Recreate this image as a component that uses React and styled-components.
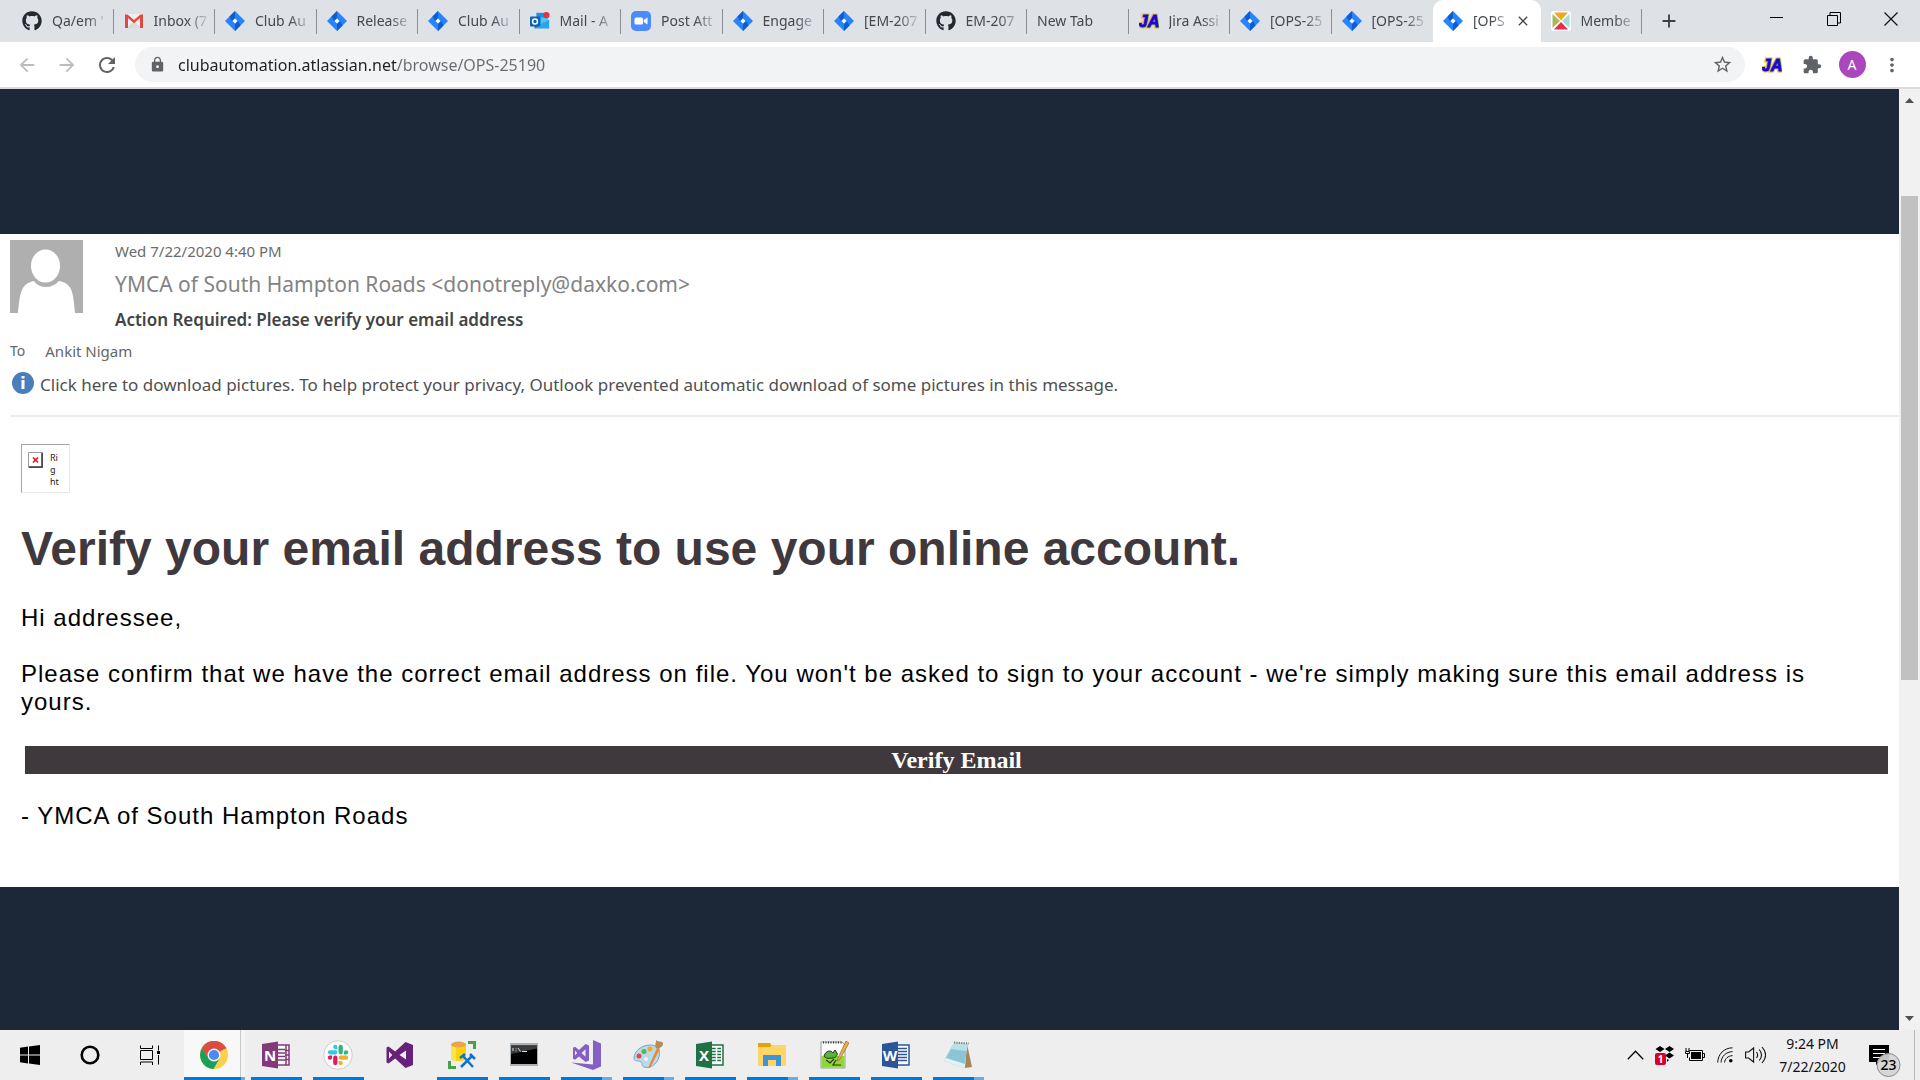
import React, { useState } from "react";
import styled, { createGlobalStyle, css } from "styled-components";
import { FaGithub } from "react-icons/fa";
import {
  MdAdd,
  MdArrowBack,
  MdArrowForward,
  MdClose,
  MdExtension,
  MdLock,
  MdMoreVert,
  MdRefresh,
  MdStarBorder,
} from "react-icons/md";

const ui = `"Noto Sans", "Open Sans", sans-serif`;
const arial = `"Liberation Sans", Arial, sans-serif`;
const times = `"Liberation Serif", "Times New Roman", serif`;

const GlobalStyle = createGlobalStyle`
  *, *::before, *::after { box-sizing: border-box; }
  body { margin: 0; font-family: ${ui}; background: #1c2738; }
  button { font: inherit; color: inherit; background: none; border: 0; padding: 0; cursor: pointer; }
  svg { display: block; flex: none; }
  h1, h2, p { margin: 0; }
`;

const Screen = styled.div`
  display: flex;
  flex-direction: column;
  height: 100vh;
  overflow: hidden;
`;

/* ---------- tab strip ---------- */

const TabStrip = styled.header`
  display: flex;
  flex: none;
  height: 42px;
  padding: 0 1px 0 12px;
  background: #dee1e6;
`;

const TabList = styled.div`
  display: flex;
  flex: 0 1 1630px;
  min-width: 0;
`;

const TabTitle = styled.span`
  flex: 1;
  min-width: 0;
  margin-left: 10px;
  overflow: hidden;
  white-space: nowrap;
  mask-image: linear-gradient(90deg, #000 calc(100% - 24px), transparent);

  &:first-child {
    margin-left: 0;
  }
`;

const Tab = styled.button`
  display: flex;
  flex: 1 1 0;
  min-width: 0;
  align-items: center;
  padding: 0 4px 0 10px;
  color: #45494d;
  font-size: 14px;
  line-height: 20px;
  text-align: left;
  background: linear-gradient(#8a8d91, #8a8d91) right 9px / 1px 25px no-repeat;
  ${(p) => p.$plain && css`background: none;`}
  ${(p) =>
    p.$active &&
    css`
      padding-right: 10px;
      background: #fff;
      border-radius: 10px 10px 0 0;
    `}
`;

const NewTab = styled.button`
  display: grid;
  place-items: center;
  width: 54px;
  color: #3c4043;
`;

const WindowControls = styled.div`
  display: flex;
  margin-left: auto;
`;

const WindowButton = styled.button`
  display: grid;
  place-items: center;
  width: 57px;
  height: 37px;
`;

/* ---------- toolbar ---------- */

const Toolbar = styled.nav`
  display: flex;
  flex: none;
  align-items: center;
  height: 47px;
  padding: 0 8px 0 7px;
  background: #fff;
  border-bottom: 2px solid #dadbe0;
`;

const ToolButton = styled.button`
  display: grid;
  place-items: center;
  width: 40px;
  height: 35px;
  color: ${(p) => (p.$faded ? "#babcbe" : "#5f6368")};
`;

const AddressBar = styled.label`
  display: flex;
  flex: 1;
  align-items: center;
  gap: 12px;
  height: 35px;
  margin: 0 7px 0 8px;
  padding: 0 3px 0 14px;
  color: #5f6368;
  background: #f1f3f4;
  border-radius: 18px;
`;

const AddressInput = styled.input`
  flex: 1;
  min-width: 0;
  padding: 0;
  border: 0;
  outline: 0;
  color: #202124;
  font-family: ${ui};
  font-size: 16px;
  line-height: 24px;
  background: linear-gradient(90deg, #202124 219px, #676b70 219px);
  background-clip: text;
  -webkit-text-fill-color: transparent;
`;

const Avatar = styled.span`
  display: grid;
  place-items: center;
  width: 27px;
  height: 27px;
  color: #fff;
  font-size: 14px;
  line-height: 20px;
  background: #ab47bc;
  border-radius: 50%;
`;

/* ---------- page ---------- */

const Viewport = styled.main`
  display: flex;
  flex: 1;
  min-height: 0;
`;

const Lightbox = styled.div`
  flex: 1;
  min-width: 0;
  padding-top: 145px;
  overflow: hidden;
  background: #1c2738;
`;

const Mail = styled.article`
  padding: 6px 0 57px;
  background: #fff;
`;

const MailHead = styled.header`
  margin-left: 10px;
  padding-bottom: 13px;
  border-bottom: 2px solid #ececee;
`;

const SenderRow = styled.div`
  display: flex;
  gap: 32px;
`;

const SentAt = styled.p`
  color: #6b6b6b;
  font-size: 15px;
  line-height: 22px;
`;

const Sender = styled.p`
  color: #838383;
  font-size: 21px;
  line-height: 44px;
`;

const Subject = styled.h2`
  color: #444;
  font-size: 17px;
  font-weight: 600;
  line-height: 28px;
`;

const ToRow = styled.p`
  display: flex;
  gap: 20px;
  color: #666;
  font-size: 15px;
  line-height: 34px;
`;

const ToLabel = styled.span`
  font-size: 14px;
`;

const Notice = styled.button`
  display: flex;
  gap: 6px;
  padding-left: 2px;
  color: #505050;
  font-size: 17px;
  line-height: 34px;
  text-align: left;
`;

const InfoIcon = styled.svg`
  margin-top: 4px;
`;

const MailBody = styled.div`
  display: flex;
  flex-direction: column;
  gap: 28px;
  padding: 27px 11px 0 21px;
  color: #000;
  font-family: ${arial};
  font-size: 24px;
  line-height: 28px;
`;

const Copy = styled.p`
  padding-right: 12px;
  letter-spacing: 1px;
`;

const MissingImage = styled.div`
  display: flex;
  gap: 7px;
  width: 49px;
  height: 49px;
  padding: 7px 6px;
  border: 1px solid #e8e8e8;
  border-top-color: #a5a5a5;
  border-left-color: #a5a5a5;
  color: #222;
  font-family: ${ui};
  font-size: 9px;
  line-height: 12px;
`;

const Title = styled.h1`
  color: #3f393d;
  font-size: 48px;
  font-weight: 700;
  line-height: 55px;
`;

const VerifyLink = styled.a`
  display: block;
  margin: 2px 0 0 4px;
  color: #fff;
  font-family: ${times};
  font-weight: 700;
  text-align: center;
  text-decoration: none;
  background: #3f393d;
`;

/* ---------- scrollbar ---------- */

const Scrollbar = styled.div`
  display: flex;
  flex: none;
  flex-direction: column;
  width: 21px;
  padding: 9px 2px;
  background: #f1f1f1;
`;

const ScrollArrow = styled.svg`
  margin: 0 auto;
`;

const ScrollGap = styled.div`
  flex: ${(p) => p.$share} 1 0;
`;

const ScrollThumb = styled.div`
  flex: 484 1 0;
  background: #c1c1c1;
`;

/* ---------- taskbar ---------- */

const Taskbar = styled.footer`
  display: flex;
  flex: none;
  height: 50px;
  background: #eee;
`;

const SystemButton = styled.button`
  display: grid;
  place-items: center;
  width: 60px;
`;

const AppList = styled.div`
  display: flex;
  padding-left: 4px;
`;

const AppButton = styled.button`
  display: grid;
  place-items: center;
  width: 62px;
  padding-right: 1px;
  border: solid transparent;
  border-width: 0 6px 0 5px;
  background: ${(p) =>
    p.$state === "idle"
      ? "none"
      : p.$state === "stacked"
        ? "linear-gradient(90deg, #0078d7 41px, #66aee7 41px) bottom / 100% 3px no-repeat"
        : "linear-gradient(#0078d7, #0078d7) bottom / 100% 3px no-repeat"};
  background-clip: padding-box;
  background-origin: padding-box;
  ${(p) =>
    p.$state === "focused" &&
    css`
      border-width: 0 1px 0 0;
      background:
        linear-gradient(90deg, #0078d7 57px, #66aee7 57px) bottom / 100% 3px no-repeat,
        linear-gradient(90deg, #f8f8f8 56px, #c8c8c8 56px 57px, #f4f4f4 57px);
      background-clip: padding-box;
      background-origin: padding-box;
    `}
`;

const Tray = styled.div`
  display: flex;
  align-items: center;
  margin-left: auto;
`;

const TrayButton = styled.button`
  display: grid;
  place-items: center;
  width: 30px;
  height: 50px;
`;

const Clock = styled.button`
  width: 85px;
  color: #111;
  font-size: 14px;
  line-height: 23px;
  text-align: center;
`;

const ActionCenter = styled.button`
  display: grid;
  place-items: center;
  width: 60px;
  height: 50px;
  margin-right: 5px;
  padding-top: 12px;
  border-right: 1px solid #bbb;
`;

/* ---------- icons ---------- */

const Jira = () => (
  <svg width="20" height="20" viewBox="0 0 20 20">
    <path d="M10 0 20 10 10 20 0 10Z" fill="#2684ff" />
    <path d="M10 0v7L7 10 4.500 5.500Z" fill="#0f5bd0" />
    <path d="M10 20v-7l3-3 2.500 4.500Z" fill="#0f5bd0" />
    <path d="M10 7.500 12.500 10 10 12.500 7.500 10Z" fill="#fff" />
  </svg>
);

const Gmail = () => (
  <svg width="20" height="20" viewBox="0 0 20 20">
    <path d="M2 3h16v14H2Z" fill="#f0eeee" />
    <path d="M3 17 10 10l7 7Z" fill="#dddada" />
    <path d="M1 3.500h2.500L10 9l6.500-5.500H19V17h-3V7l-6 5.200L4 7v10H1Z" fill="#dd4b3e" />
  </svg>
);

const Outlook = () => (
  <svg width="20" height="20" viewBox="0 0 22 20">
    <path d="M7 1h12v12H7Z" fill="#1c8fe0" />
    <path d="M12 6h8v6h-8Z" fill="#50c5f5" />
    <path d="M5 9l8 5 8-5v9H5Z" fill="#1272c4" />
    <path d="M5 18 21 9v9Z" fill="#2aa5ec" />
    <rect y="5" width="11" height="11" rx="1" fill="#0a62b5" />
    <circle cx="5.500" cy="10.500" r="2.700" fill="none" stroke="#fff" strokeWidth="1.600" />
    <circle cx="18" cy="3.500" r="3.500" fill="#d93840" />
  </svg>
);

const Zoom = () => (
  <svg width="20" height="20" viewBox="0 0 20 20">
    <rect width="20" height="20" rx="5" fill="#4a8cff" />
    <rect x="3.500" y="6.500" width="8.500" height="7" rx="1.500" fill="#fff" />
    <path d="M12.700 9 16.500 6.500v7L12.700 11Z" fill="#fff" />
  </svg>
);

const JiraAssistant = () => (
  <svg width="20" height="20" viewBox="0 0 20 20">
    <text
      x="10"
      y="16"
      textAnchor="middle"
      fontFamily="Liberation Sans Narrow, Liberation Sans, sans-serif"
      fontSize="16"
      fontWeight="700"
      fontStyle="italic"
      fill="none"
      stroke="#d8c440"
      strokeWidth="3"
      aria-hidden="true"
    >
      JA
    </text>
    <text
      x="10"
      y="16"
      textAnchor="middle"
      fontFamily="Liberation Sans Narrow, Liberation Sans, sans-serif"
      fontSize="16"
      fontWeight="700"
      fontStyle="italic"
      fill="#1708d0"
      stroke="#1708d0"
      strokeWidth=".9"
    >
      JA
    </text>
  </svg>
);

const Member = () => (
  <svg width="20" height="20" viewBox="0 0 20 20">
    <rect width="20" height="20" rx="3" fill="#fff" />
    <path d="M3 1.500h14L10 9.500Z" fill="#efa820" />
    <path d="M1.500 3 9 10l-7.500 7Z" fill="#a9b957" />
    <path d="M18.500 3 11 10l7.500 7Z" fill="#a4dcd8" />
    <path d="M3 18.500h14L10 11Z" fill="#ec2c4c" />
  </svg>
);

const Minimise = () => (
  <svg width="13" height="13" viewBox="0 0 13 13" stroke="#000">
    <path d="M0 5.500h13" />
  </svg>
);

const Restore = () => (
  <svg width="14" height="14" viewBox="0 0 14 14" fill="none" stroke="#000">
    <path d="M.5 3.500h10v10H.5ZM3 3.500v-3h10.500V11h-3" />
  </svg>
);

const CloseWindow = () => (
  <svg width="14" height="14" viewBox="0 0 14 14" stroke="#111" strokeWidth="1.200">
    <path d="m.5.5 13 13M13.500.5l-13 13" />
  </svg>
);

const Person = () => (
  <svg width="73" height="73" viewBox="0 0 73 73">
    <path d="M0 0h73v73H0Z" fill="#afafaf" />
    <path d="M8 73C10 50 12 44 24 41c3 4 7 6 12 6s9-2 13-6c13 3 14 9 16 32Z" fill="#fff" />
    <ellipse cx="35.500" cy="26" rx="14.500" ry="16.500" fill="#fff" />
  </svg>
);

const Windows = () => (
  <svg width="20" height="20" viewBox="0 0 20 20">
    <path d="M0 2.800 8 1.600v7.900H0ZM9 1.500 20 0v9.500H9ZM0 10.500h8v7.900l-8-1.200ZM9 10.500h11V20L9 18.500Z" />
  </svg>
);

const Cortana = () => (
  <svg width="20" height="20" viewBox="0 0 20 20" fill="none" stroke="#000" strokeWidth="2.600">
    <circle cx="10" cy="10" r="8.300" />
  </svg>
);

const TaskView = () => (
  <svg width="20" height="20" viewBox="0 0 20 20" fill="none" stroke="#000">
    <path d="M.5.5v3h12v-3M.5 5.500h12v9H.5ZM.5 20v-3h12v3M18.500.5v5M18.500 10v9.500" />
    <path d="M17 6h3v3h-3Z" fill="#000" stroke="none" />
  </svg>
);

const Chrome = () => (
  <svg width="28" height="28" viewBox="0 0 28 28">
    <circle cx="14" cy="14" r="14" fill="#fcd04b" />
    <path d="M14 14 1.900 7A14 14 0 0 1 26.100 7Z" fill="#dc4c3f" />
    <path d="M14 7.500h12.500A14 14 0 0 0 1.900 7L8 17.500Z" fill="#dc4c3f" />
    <path d="M1.900 7A14 14 0 0 0 13.500 28l6-10.500H8.400Z" fill="#1a9f5c" />
    <circle cx="14" cy="14" r="6.500" fill="#f4f4f4" />
    <circle cx="14" cy="14" r="5.100" fill="#4b8bf5" />
  </svg>
);

const OfficeApp = ({ letter, color, children }) => (
  <svg width="28" height="28" viewBox="0 0 28 28">
    <path d="M15 4h12v20H15Z" fill="#fff" stroke={color} strokeWidth="1.500" />
    {children}
    <path d="M0 3 16 .5v27L0 25Z" fill={color} />
    <text
      x="8"
      y="19.500"
      textAnchor="middle"
      fontFamily="Open Sans, sans-serif"
      fontSize="15"
      fontWeight="700"
      fill="#fff"
    >
      {letter}
    </text>
  </svg>
);

const OneNote = () => (
  <OfficeApp letter="N" color="#80397b">
    <path d="M16 8.500h7M16 12h7M16 15.500h7M16 19h7M24 4v20M23 9.500h4M23 14h4M23 18.500h4" stroke="#80397b" strokeWidth="1.500" />
  </OfficeApp>
);

const Excel = () => (
  <OfficeApp letter="X" color="#207245">
    <path d="M16 7.500h9M16 10.500h9M16 13.500h9M16 16.500h9M16 19.500h9" stroke="#207245" strokeWidth="1.500" />
    <path d="M20.500 6v15" stroke="#fff" strokeWidth="1.500" />
  </OfficeApp>
);

const Word = () => (
  <OfficeApp letter="W" color="#2a5699">
    <path d="M16 7.500h9M16 10.500h9M16 13.500h9M16 16.500h9M16 19.500h9" stroke="#2a5699" strokeWidth="1.400" />
  </OfficeApp>
);

const slackArm =
  "M8.834 5.042a2.520 2.520 0 1 1 2.520-2.520v2.520ZM8.834 6.313a2.520 2.520 0 0 1 0 5.042H2.522a2.520 2.520 0 0 1 0-5.042Z";

const Slack = () => (
  <svg width="30" height="30" viewBox="0 0 30 30">
    <circle cx="15" cy="15" r="14.300" fill="#fbfbfb" stroke="#cfcfcf" />
    <g transform="translate(4.800 4.800) scale(.85)">
      <path d={slackArm} fill="#36c5f0" />
      <path d={slackArm} fill="#2eb67d" transform="rotate(90 12 12)" />
      <path d={slackArm} fill="#ecb22e" transform="rotate(180 12 12)" />
      <path d={slackArm} fill="#e01e5a" transform="rotate(270 12 12)" />
    </g>
  </svg>
);

const VisualStudio = () => (
  <svg width="28" height="28" viewBox="0 0 28 28" fill="#68217a" fillRule="evenodd">
    <path d="M19.500 1 27 4v20l-7.500 3-10.300-9.500L2.500 22.500.5 21.500v-15l2-1 6.700 5ZM20 9.500 13.500 14l6.500 4.500ZM3 10.500v7L6.300 14Z" />
  </svg>
);

const VisualStudioClassic = () => (
  <svg width="30" height="30" viewBox="0 0 30 30" fill="#865fc5" fillRule="evenodd">
    <path d="m22 0 8 3.500v23L22 30 0 22.500l22 2Z" />
    <path d="M14.500 4 18 5.500v15L14.500 22 8 16.500l-4 3.200-2-1v-11l2-1L8 10Zm0 5.200L10.500 13l4 3.800ZM4 10.500v5L6.200 13Z" />
  </svg>
);

const SqlTools = () => (
  <svg width="28" height="28" viewBox="0 0 28 28">
    <path d="M3 3v14c0 2 3 3 7.500 3s7.500-1 7.500-3V3Z" fill="#fbd20c" />
    <path d="M3 3v14c0 1.500 2 2.500 5 2.900V3Z" fill="#ffe34a" />
    <ellipse cx="10.500" cy="3.500" rx="7.500" ry="3" fill="#e8a550" />
    <path d="M20 1.500h6.500V8M1.500 20v6.500H8" fill="none" stroke="#47a147" strokeWidth="3" />
    <path d="m13 26 11-11M15 15l10 11M12 17l5-4M22 13l5 5" fill="none" stroke="#1273c6" strokeWidth="2.500" />
  </svg>
);

const Terminal = () => (
  <svg width="28" height="28" viewBox="0 0 28 28">
    <path d="M0 2h28v23H0Z" fill="#a9b0b6" />
    <path d="M1 4.500h26V23H1Z" fill="#000" />
    <path d="M1 4.500h26v3L1 13Z" fill="#3c3c3c" />
    <path d="M3 7v3M6 7.500v.8M6 9.500v.8M8 7l2.500 3.500M12 10.500h5" stroke="#ddd" />
  </svg>
);

const Paint = () => (
  <svg width="30" height="30" viewBox="0 0 30 30">
    <path d="M17 5c7 0 11 5 9 12-2 8-10 12-15 10-3-1-1-4-3-5-3-2-7 0-7-4C1 11 9 5 17 5Z" fill="#b9d9ee" stroke="#7ba6c2" />
    <circle cx="6" cy="16" r="2.500" fill="#e04c3c" />
    <circle cx="11" cy="11.500" r="2.500" fill="#5ab54b" />
    <circle cx="17" cy="9" r="2.500" fill="#f3a62b" />
    <circle cx="13" cy="19" r="2" fill="#eef5f9" />
    <path d="m15 28 9-20 3 1-10 19Z" fill="#e78a35" />
    <path d="M23 8c-2-3 1-7 0-8 3 3 7 0 7 4 0 3-3 3-4 5Z" fill="#b98a5b" />
  </svg>
);

const Folder = () => (
  <svg width="28" height="28" viewBox="0 0 28 28">
    <path d="M0 2h12l2 3v4H0Z" fill="#e3a30b" />
    <path d="M0 6h12l2-2h14v21H0Z" fill="#ffd567" />
    <path d="M5 25V14h18v11h-5v-6h-8v6Z" fill="#3e94d6" />
  </svg>
);

const NotepadPlus = () => (
  <svg width="30" height="30" viewBox="0 0 30 30">
    <path d="M2 2h21l3 3v23H2Z" fill="#fdfdfd" stroke="#999" />
    <path d="M2.500 16H25.500v11.500h-23Z" fill="#8fd733" />
    <path d="M4 2.500h20" stroke="#333" strokeWidth="2" strokeDasharray="1 1.500" />
    <path d="M5 16c2-6 7-6 9-3l2-3 2 3c1 3-2 5-5 5-4 1-7 0-8-2Z" fill="#55b53c" stroke="#26351e" />
    <path d="m7 20 4 3 4-4M17 20l-3 5h8" fill="none" stroke="#26351e" strokeWidth="1.200" />
    <path d="m19 18 8-17 3 2-9 16-3 2Z" fill="#e9b04a" stroke="#8f6a28" strokeWidth=".7" />
  </svg>
);

const Notepad = () => (
  <svg width="30" height="30" viewBox="0 0 30 30">
    <path d="m24 4 5 23-7 1Z" fill="#a58757" />
    <path d="m11 3 14 1-4 24L1 21Z" fill="#8cc6d6" />
    <path d="m11 3 14 1-1.500 7L7 9Z" fill="#b9dfe9" />
    <path d="m1 21 20 7 1-4L3 18Z" fill="#e3f1f4" />
    <path d="M11 2.500 26 3.500" stroke="#7a7a7a" strokeWidth="2" strokeDasharray="1.200 1.200" />
  </svg>
);

const Chevron = () => (
  <svg width="17" height="10" viewBox="0 0 17 10" fill="none" stroke="#000" strokeWidth="1.300">
    <path d="M.8 9.200 8.500 1.200l7.700 8" />
  </svg>
);

const Dropbox = () => (
  <svg width="20" height="20" viewBox="0 0 20 20">
    <path d="m5 1 4.500 3L5 7 .5 4ZM14.500 1 19 4l-4.500 3L10 4ZM14.500 7.500l4.500 3-4.500 3-4.500-3ZM12 14l2 1-2 2Z" />
    <rect y="8" width="11" height="12" rx="2" fill="#d9002c" />
    <text x="5.500" y="17.500" textAnchor="middle" fontFamily="Open Sans, sans-serif" fontSize="10" fontWeight="700" fill="#fff">
      1
    </text>
  </svg>
);

const Battery = () => (
  <svg width="20" height="14" viewBox="0 0 20 14">
    <path d="M4.500 2.500h13v10h-13v-3M18 5.500h1.500v4H18" fill="none" stroke="#000" />
    <path d="M6 4h10v7H6Z" />
    <path d="M1 0v3M4 0v3M.5 3.500h4v2h-4ZM2.500 6v4" fill="none" stroke="#000" />
  </svg>
);

const Wifi = () => (
  <svg width="16" height="16" viewBox="0 0 16 16" fill="none" stroke="#111">
    <path d="M.7 15.500C1 7 7 1 15.500.8M4 15.500C4.500 9 9 5 15.500 4.600M7.500 15.500C8 11.500 11 9 15.500 8.600" />
    <circle cx="13.800" cy="13.800" r="1.800" fill="#000" stroke="none" />
  </svg>
);

const Volume = () => (
  <svg width="21" height="18" viewBox="0 0 21 18" fill="none" stroke="#111" strokeWidth="1.100">
    <path d="M.6 6v6h3l5 4V2l-5 4ZM11.500 6c1.500 2 1.500 4 0 6M14.200 3.500c3 3.500 3 7.500 0 11M17 1c4.500 5 4.500 11 0 16" />
  </svg>
);

const Notifications = () => (
  <svg width="34" height="32" viewBox="0 0 34 32">
    <path d="M1 0h20v17h-9l-4 3v-3H1Z" />
    <path d="M5 4.500h12M5 8.500h12M5 12.500h8" stroke="#fff" />
    <circle cx="20.500" cy="20" r="11.500" fill="#d5d5d5" fillOpacity=".92" stroke="#8a8a8a" />
    <text x="20.500" y="25" textAnchor="middle" fontFamily="Noto Sans, sans-serif" fontSize="14" fontWeight="500">
      23
    </text>
  </svg>
);

/* ---------- data ---------- */

const tabs = [
  ["Qa/em '", () => <FaGithub size={20} color="#24292e" />],
  ["Inbox (7", Gmail],
  ["Club Au", Jira],
  ["Release", Jira],
  ["Club Au", Jira],
  ["Mail - A", Outlook],
  ["Post Att", Zoom],
  ["Engage", Jira],
  ["[EM-207", Jira],
  ["EM-207", () => <FaGithub size={20} color="#24292e" />],
  ["New Tab", null],
  ["Jira Assi", JiraAssistant],
  ["[OPS-25", Jira],
  ["[OPS-25", Jira],
  ["[OPS", Jira],
  ["Membe", Member],
];

const activeTab = 14;

const apps = [
  ["Google Chrome", Chrome, "focused"],
  ["OneNote", OneNote, "open"],
  ["Slack", Slack, "open"],
  ["Visual Studio", VisualStudio, "idle"],
  ["SQL Server tools", SqlTools, "open"],
  ["Command Prompt", Terminal, "open"],
  ["Visual Studio 2017", VisualStudioClassic, "stacked"],
  ["Paint", Paint, "stacked"],
  ["Excel", Excel, "open"],
  ["File Explorer", Folder, "stacked"],
  ["Notepad++", NotepadPlus, "open"],
  ["Word", Word, "open"],
  ["Notepad", Notepad, "stacked"],
];

export default function App() {
  const [url, setUrl] = useState("clubautomation.atlassian.net/browse/OPS-25190");

  return (
    <Screen>
      <GlobalStyle />

      <TabStrip>
        <TabList role="tablist">
          {tabs.map(([title, Icon], i) => (
            <Tab
              key={i}
              role="tab"
              aria-selected={i === activeTab}
              $active={i === activeTab}
              $plain={i === activeTab - 1}
            >
              {Icon && <Icon />}
              <TabTitle>{title}</TabTitle>
              {i === activeTab && <MdClose size={16} />}
            </Tab>
          ))}
        </TabList>
        <NewTab aria-label="New tab">
          <MdAdd size={22} />
        </NewTab>
        <WindowControls>
          <WindowButton aria-label="Minimise"><Minimise /></WindowButton>
          <WindowButton aria-label="Restore"><Restore /></WindowButton>
          <WindowButton aria-label="Close"><CloseWindow /></WindowButton>
        </WindowControls>
      </TabStrip>

      <Toolbar>
        <ToolButton aria-label="Back" $faded><MdArrowBack size={22} /></ToolButton>
        <ToolButton aria-label="Forward" $faded><MdArrowForward size={22} /></ToolButton>
        <ToolButton aria-label="Reload"><MdRefresh size={24} /></ToolButton>
        <AddressBar>
          <MdLock size={17} />
          <AddressInput aria-label="Address" value={url} onChange={(e) => setUrl(e.target.value)} />
          <ToolButton aria-label="Bookmark this page"><MdStarBorder size={21} /></ToolButton>
        </AddressBar>
        <ToolButton aria-label="Jira Assistant"><JiraAssistant /></ToolButton>
        <ToolButton aria-label="Extensions"><MdExtension size={20} /></ToolButton>
        <ToolButton aria-label="Profile"><Avatar>A</Avatar></ToolButton>
        <ToolButton aria-label="Menu"><MdMoreVert size={22} /></ToolButton>
      </Toolbar>

      <Viewport>
        <Lightbox>
          <Mail>
            <MailHead>
              <SenderRow>
                <Person />
                <div>
                  <SentAt>Wed 7/22/2020 4:40 PM</SentAt>
                  <Sender>YMCA of South Hampton Roads &lt;donotreply@daxko.com&gt;</Sender>
                  <Subject>Action Required: Please verify your email address</Subject>
                </div>
              </SenderRow>
              <ToRow>
                <ToLabel>To</ToLabel>
                <span>Ankit Nigam</span>
              </ToRow>
              <Notice>
                <InfoIcon width="22" height="22" viewBox="0 0 22 22">
                  <circle cx="11" cy="11" r="11" fill="#4a7ebb" />
                  <path d="M9.500 4h3v2.500h-3ZM9.500 8h3v9h-3Z" fill="#fff" />
                </InfoIcon>
                Click here to download pictures. To help protect your privacy, Outlook prevented automatic download of
                some pictures in this message.
              </Notice>
            </MailHead>

            <MailBody>
              <MissingImage>
                <svg width="15" height="16" viewBox="0 0 15 16">
                  <path d="M.5.5h14v15H.5Z" fill="#fff" stroke="#999" />
                  <path d="M14 1v14H1" fill="none" stroke="#333" strokeWidth="1.500" />
                  <path d="m5 5.500 5 5M10 5.500l-5 5" stroke="#e81313" strokeWidth="1.700" />
                </svg>
                <span>Ri<br />g<br />ht</span>
              </MissingImage>
              <Title>Verify your email address to use your online account.</Title>
              <Copy>Hi addressee,</Copy>
              <Copy>
                Please confirm that we have the correct email address on file. You won't be asked to sign to your
                account - we're simply making sure this email address is yours.
              </Copy>
              <VerifyLink href="#verify">Verify Email</VerifyLink>
              <Copy>- YMCA of South Hampton Roads</Copy>
            </MailBody>
          </Mail>
        </Lightbox>

        <Scrollbar>
          <ScrollArrow width="9" height="5" viewBox="0 0 9 5" fill="#505050"><path d="M0 5 4.500 0 9 5Z" /></ScrollArrow>
          <ScrollGap $share={93} />
          <ScrollThumb />
          <ScrollGap $share={336} />
          <ScrollArrow width="9" height="5" viewBox="0 0 9 5" fill="#505050"><path d="M0 0h9L4.500 5Z" /></ScrollArrow>
        </Scrollbar>
      </Viewport>

      <Taskbar>
        <SystemButton aria-label="Start"><Windows /></SystemButton>
        <SystemButton aria-label="Search"><Cortana /></SystemButton>
        <SystemButton aria-label="Task view"><TaskView /></SystemButton>
        <AppList>
          {apps.map(([name, Icon, state]) => (
            <AppButton key={name} aria-label={name} $state={state}>
              <Icon />
            </AppButton>
          ))}
        </AppList>
        <Tray>
          <TrayButton aria-label="Show hidden icons"><Chevron /></TrayButton>
          <TrayButton aria-label="Dropbox"><Dropbox /></TrayButton>
          <TrayButton aria-label="Battery"><Battery /></TrayButton>
          <TrayButton aria-label="Network"><Wifi /></TrayButton>
          <TrayButton aria-label="Volume"><Volume /></TrayButton>
          <Clock>
            9:24 PM
            <br />
            7/22/2020
          </Clock>
          <ActionCenter aria-label="Notifications"><Notifications /></ActionCenter>
        </Tray>
      </Taskbar>
    </Screen>
  );
}
